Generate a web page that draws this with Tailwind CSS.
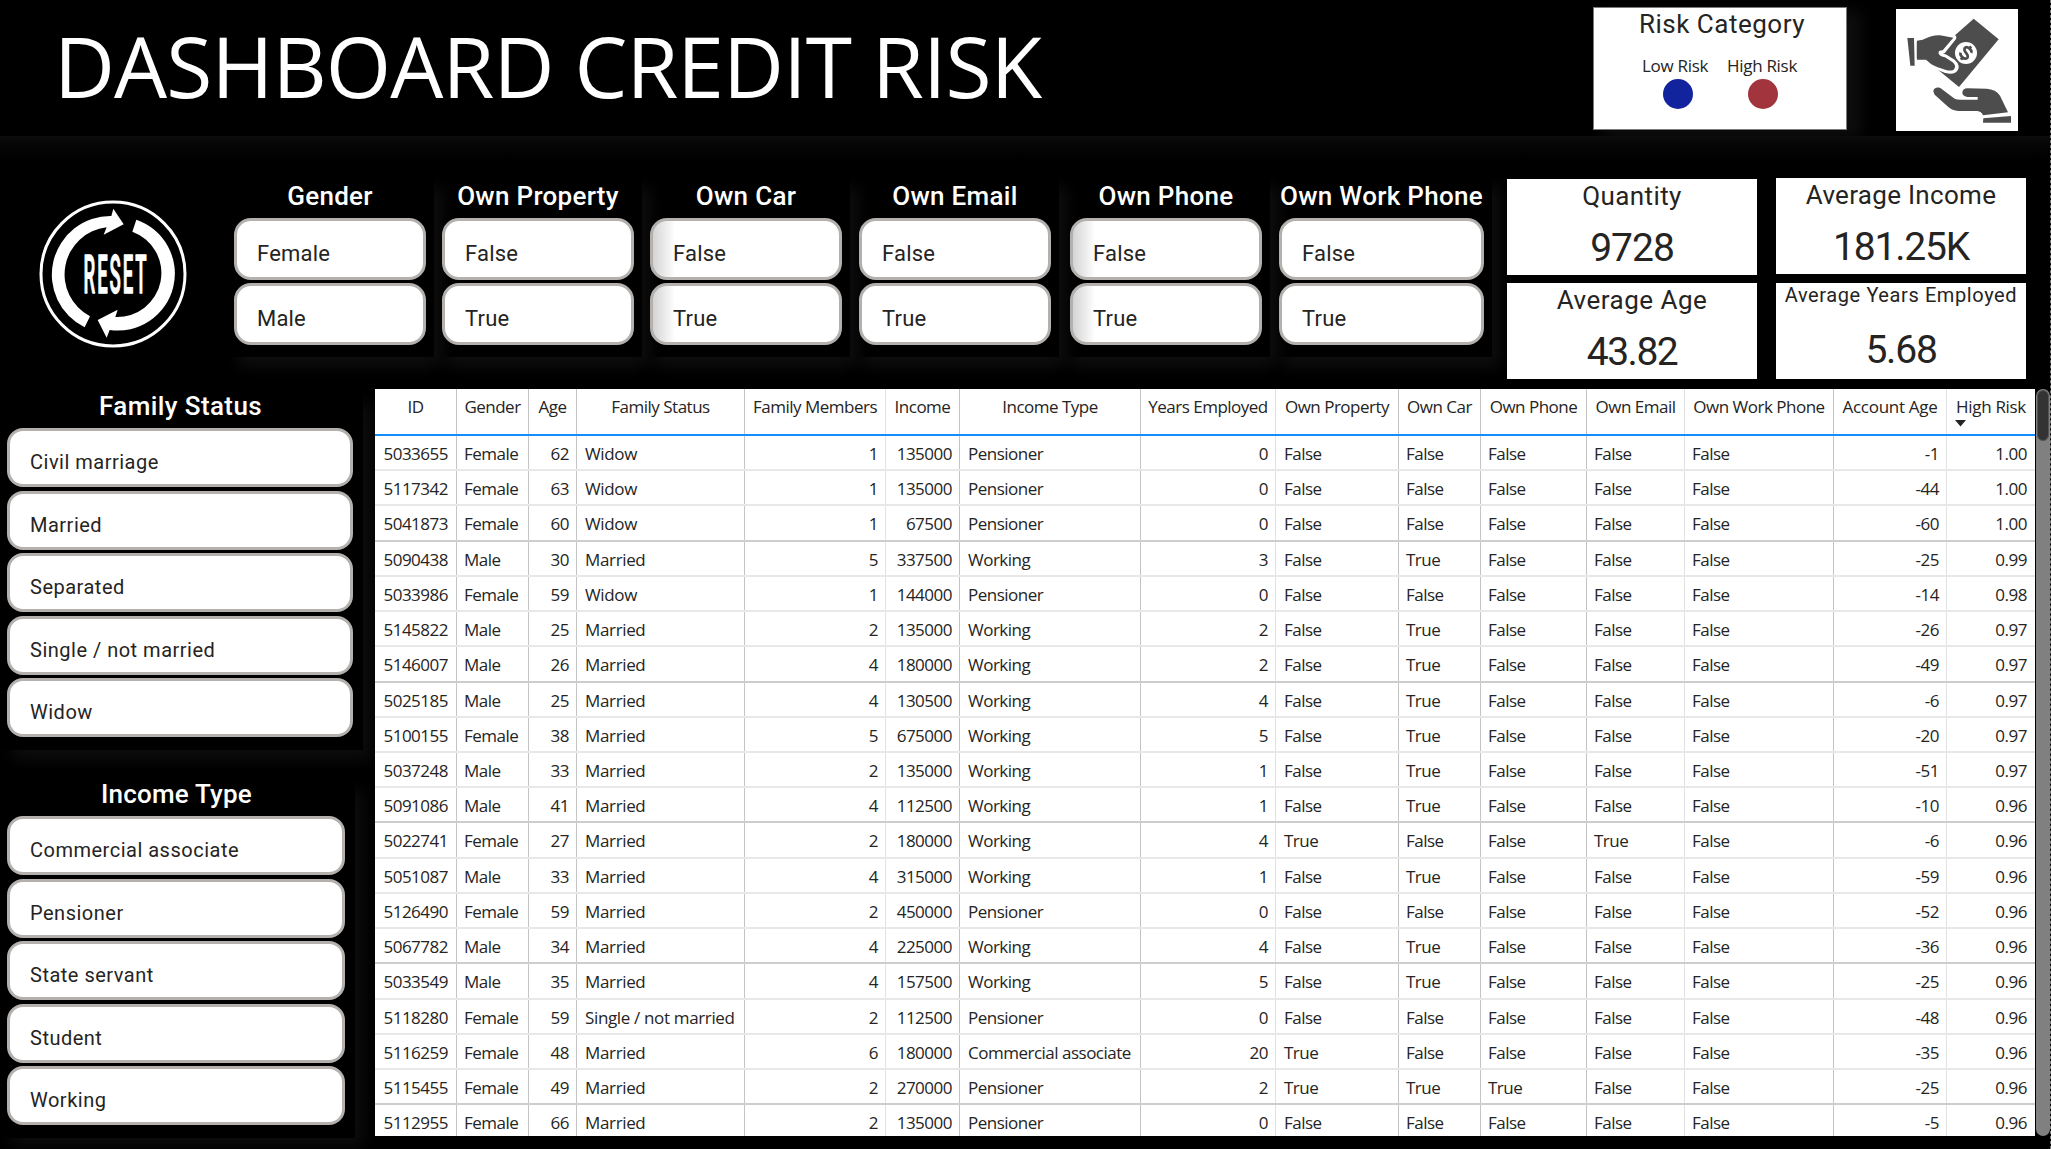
<!DOCTYPE html>
<html lang="en">
<head>
<meta charset="utf-8">
<title>Dashboard Credit Risk</title>
<script src="https://cdn.jsdelivr.net/npm/@tailwindcss/browser@4"></script>
</head>
<body class="w-[2051px] h-[1149px] overflow-hidden bg-black font-['Open_Sans',sans-serif] text-[#252423]">
<div class="relative flex h-full w-full flex-col">
  <header class="flex h-[136px] shrink-0 items-start">
    <h1 class="w-[1593px] pl-[54px] pt-[9px] text-[84px] leading-[114px] tracking-[-0.9px] whitespace-nowrap text-white">DASHBOARD CREDIT RISK</h1>
    <section class="mt-[7px] h-[123px] w-[254px] border border-[#7a7a7a] bg-white shadow-[12px_6px_14px_2px_#0e0e0e]">
      <h2 class="pt-px text-center font-[Roboto] text-[26px] leading-[30px] tracking-[0.5px] pl-[4px]">Risk Category</h2>
      <div class="flex gap-[19px] pl-[48px] pt-[15px] text-[17px] leading-[24px] tracking-[-0.3px]">
        <div class="flex w-[66px] flex-col items-center whitespace-nowrap"><span>Low Risk</span><i class="mt-px ml-[5px] size-[30px] rounded-full bg-[#12239e]"></i></div>
        <div class="flex w-[70px] flex-col items-center whitespace-nowrap"><span>High Risk</span><i class="mt-px ml-px size-[30px] rounded-full bg-[#a1343c]"></i></div>
      </div>
    </section>
    <svg class="ml-[49px] mt-[9px] size-[122px] shrink-0 bg-white" viewBox="18 15 366 366" fill="#4d4d4d">
      <path d="M251 44 326 106 207 249 142 196 112 167Z" />
      <path d="M70 100 98 107Q130 92 150 94L190 101 158 141Q143 140 146 150 150 158 165 160L188 174Q204 188 192 198 183 203 168 198 140 190 112 172L70 172Z" stroke="#fff" stroke-width="18" stroke-linejoin="round"/>
      <path d="M18 60H170L215 55 188 100 130 80 80 95V180L105 178 141 196 141 240H18Z" fill="#fff"/>
      <path d="M81 110 98 107Q130 92 150 94L190 101 158 139Q143 139 146 149 150 157 165 160L188 175Q201 187 191 197 183 202 168 198 140 190 124 181L108 167H81Z" />
      <path d="M52 102H72L74 185H61ZM130 262C130 250 148 246 156 256L194 284Q200 287 212 287H263V279H232Q216 276 217 265 219 253 232 253L290 254Q318 256 330 275L354 325 279 334Q274 322 262 321H205Q186 320 175 309L134 272ZM280 343 363 336V356H279Z"/>
      <circle cx="228" cy="147" r="33" fill="#fff"/>
      <g transform="rotate(38 228 147)" fill="none" stroke="#4d4d4d" stroke-width="8"><path d="M240 137C238 128 216 127 216 138 217 150 240 143 240 156 239 167 217 166 215 156M228 122V131M228 163V172"/></g>
    </svg>
  </header>

  <section class="flex h-[253px] shrink-0 bg-linear-to-b from-[#0c0c0c] to-black to-[40px] pt-[37px]">
    <div class="w-[226px] shrink-0 pl-[39px] pt-[27px]">
      <svg class="size-[148px] overflow-visible" viewBox="26 28 444 444" fill="#fff">
        <circle cx="248" cy="250" r="216" fill="none" stroke="#fff" stroke-width="9"/>
        <path d="M163 410A176 176 0 0 1 243 76L249 54 280 101 220 132 229 110A142 142 0 0 0 179 377Z"/>
        <path d="M318 87A171 171 0 0 1 238 418L229 441 202 388 262 357 255 379A132 132 0 0 0 306 123Z"/>
        <g transform="translate(257 306) scale(.345 1)"><text text-anchor="middle" font-family="Roboto" font-weight="500" font-size="162" letter-spacing="16" stroke="#fff" stroke-width="4" stroke-linejoin="round">RESET</text></g>
      </svg>
    </div>
    <div id="slicers" class="flex w-[1266px] shrink-0"></div>
    <div class="ml-[15px] grid w-[519px] shrink-0 grid-cols-[250px_250px] content-start gap-x-[19px] pt-[5px] text-center font-[Roboto]">
      <article class="mt-px h-[96px] bg-white"><h3 class="pt-[2px] text-[26px] leading-[30px] tracking-[0.4px]">Quantity</h3><p class="mt-[13px] text-[39px] leading-[48px] tracking-[-1px]">9728</p></article>
      <article class="h-[96px] bg-white"><h3 class="pt-[2px] text-[26px] leading-[30px] tracking-[0.3px]">Average Income</h3><p class="mt-[13px] text-[39px] leading-[48px] tracking-[-1.2px]">181.25K</p></article>
      <article class="mt-[8px] h-[96px] bg-white"><h3 class="pt-[2px] text-[26px] leading-[30px] tracking-[0.5px]">Average Age</h3><p class="mt-[13px] text-[39px] leading-[48px] tracking-[-1.5px]">43.82</p></article>
      <article class="mt-[8px] h-[96px] bg-white"><h3 class="text-[20px] leading-[24px] tracking-[0.6px]">Average Years Employed</h3><p class="mt-[19px] text-[39px] leading-[48px] tracking-[-1.2px]">5.68</p></article>
    </div>
  </section>

  <main class="flex min-h-0 flex-1">
    <aside class="w-[375px] shrink-0 font-[Roboto]">
      <section class="h-[361px] w-[363px] shadow-[10px_12px_14px_-2px_#0d0d0d]">
        <h2 class="pt-[2px] pr-[2px] text-center text-[26px] font-medium leading-[30px] tracking-[0.4px] text-white">Family Status</h2>
        <div id="family" class="mt-[7px] flex w-[353px] flex-col gap-[3.5px] pl-[7px]"></div>
      </section>
      <section class="mt-[28px] h-[360px] w-[355px] shadow-[10px_10px_14px_-2px_#0d0d0d]">
        <h2 class="pt-px pr-[2px] text-center text-[26px] font-medium leading-[30px] tracking-[0.2px] text-white">Income Type</h2>
        <div id="income" class="mt-[7px] flex w-[345px] flex-col gap-[3.5px] pl-[7px]"></div>
      </section>
    </aside>
    <section class="h-[747px] w-[1660px] shrink-0 overflow-hidden bg-white text-[17px] tracking-[-0.5px]">
      <div id="head" class="grid h-[47px] grid-cols-[82px_72px_48px_168px_141px_74px_181px_135px_123px_82px_106px_98px_149px_113px_88px] border-b-2 border-[#118dff] text-center"></div>
      <div id="rows"></div>
    </section>
    <div class="ml-px h-[747px] w-[14px] rounded-full bg-[#808080] p-px"><div class="h-[51px] rounded-full border border-[#555] bg-[#333]"></div></div>
  </main>
  <div class="absolute right-0 top-0 h-full border-r border-dashed border-[#777]"></div>
</div>

<script>
const slicers = [
  ['Gender', ['Female', 'Male'], 'w-[208px] pl-[8px]', ''],
  ['Own Property', ['False', 'True'], 'w-[208px] pl-[8px]', ''],
  ['Own Car', ['False', 'True'], 'w-[208px] pl-[8px]', 'shade'],
  ['Own Email', ['False', 'True'], 'w-[209px] pl-[9px]', ''],
  ['Own Phone', ['False', 'True'], 'w-[211px] pl-[11px]', 'shade'],
  ['Own Work Phone', ['False', 'True'], 'w-[222px] pl-[9px]', ''],
];
document.getElementById('slicers').innerHTML = slicers.map(([title, items, width, shade]) => `
  <section class="${width} pr-[8px] h-[184px] font-[Roboto] shadow-[10px_12px_14px_-2px_#0e0e0e]">
    <h2 class="-mx-[8px] pt-[8px] text-center text-[26px] font-medium leading-[30px] tracking-[0.3px] whitespace-nowrap text-white">${title}</h2>
    <div class="mt-[7px] flex flex-col gap-[3px]">${items.map(t => `
      <button class="block h-[62px] w-full rounded-[17px] border-[3px] border-[#b3b0ad] pl-[20px] pt-[9px] text-left text-[22px] leading-[47px] tracking-[0.2px] ${shade ? 'bg-linear-to-r from-[#d4d4d4] to-white to-[22px]' : 'bg-white'}">${t}</button>`).join('')}
    </div>
  </section>`).join('');

const list = (id, items) => document.getElementById(id).innerHTML = items.map(t =>
  `<button class="block h-[59px] rounded-[16px] border-[3px] border-[#b3b0ad] bg-white pl-[20px] pt-[9px] text-left text-[20px] leading-[44px] tracking-[0.5px]">${t}</button>`).join('');
list('family', ['Civil marriage', 'Married', 'Separated', 'Single / not married', 'Widow']);
list('income', ['Commercial associate', 'Pensioner', 'State servant', 'Student', 'Working']);

const columns = ['ID', 'Gender', 'Age', 'Family Status', 'Family Members', 'Income', 'Income Type', 'Years Employed', 'Own Property', 'Own Car', 'Own Phone', 'Own Email', 'Own Work Phone', 'Account Age', 'High Risk'];
const numeric = [0, 2, 4, 5, 7, 13, 14];
const wide = [0, 3, 6, 8, 14];
const border = i => i === 14 ? '' : [4, 7, 11, 13].includes(i) ? 'border-r border-[#e2e2e2]' : 'border-r border-[#c4c4c4]';
const padding = i => numeric.includes(i) ? (wide.includes(i) ? 'pr-[8px] text-right' : 'pr-[7px] text-right') : (wide.includes(i) ? 'pl-[8px]' : 'pl-[7px]');
document.getElementById('head').innerHTML = columns.map((c, i) =>
  `<div class="relative pt-[6px] leading-[24px] whitespace-nowrap ${i > 12 ? 'tracking-[-0.3px]' : ''} ${border(i)}">${c}${i === 14 ? '<svg class="absolute left-[8px] top-[31px] h-[7px] w-[11px]" viewBox="0 0 11 7"><path d="M0 0H11L5.5 6.5Z" fill="#252423"/></svg>' : ''}</div>`).join('');

const data = `5033655|Female|62|Widow|1|135000|Pensioner|0|False|False|False|False|False|-1|1.00
5117342|Female|63|Widow|1|135000|Pensioner|0|False|False|False|False|False|-44|1.00
5041873|Female|60|Widow|1|67500|Pensioner|0|False|False|False|False|False|-60|1.00
5090438|Male|30|Married|5|337500|Working|3|False|True|False|False|False|-25|0.99
5033986|Female|59|Widow|1|144000|Pensioner|0|False|False|False|False|False|-14|0.98
5145822|Male|25|Married|2|135000|Working|2|False|True|False|False|False|-26|0.97
5146007|Male|26|Married|4|180000|Working|2|False|True|False|False|False|-49|0.97
5025185|Male|25|Married|4|130500|Working|4|False|True|False|False|False|-6|0.97
5100155|Female|38|Married|5|675000|Working|5|False|True|False|False|False|-20|0.97
5037248|Male|33|Married|2|135000|Working|1|False|True|False|False|False|-51|0.97
5091086|Male|41|Married|4|112500|Working|1|False|True|False|False|False|-10|0.96
5022741|Female|27|Married|2|180000|Working|4|True|False|False|True|False|-6|0.96
5051087|Male|33|Married|4|315000|Working|1|False|True|False|False|False|-59|0.96
5126490|Female|59|Married|2|450000|Pensioner|0|False|False|False|False|False|-52|0.96
5067782|Male|34|Married|4|225000|Working|4|False|True|False|False|False|-36|0.96
5033549|Male|35|Married|4|157500|Working|5|False|True|False|False|False|-25|0.96
5118280|Female|59|Single / not married|2|112500|Pensioner|0|False|False|False|False|False|-48|0.96
5116259|Female|48|Married|6|180000|Commercial associate|20|True|False|False|False|False|-35|0.96
5115455|Female|49|Married|2|270000|Pensioner|2|True|True|True|False|False|-25|0.96
5112955|Female|66|Married|2|135000|Pensioner|0|False|False|False|False|False|-5|0.96`;
document.getElementById('rows').innerHTML = data.split('\n').map((line, r) => `
  <div class="grid h-[35.22px] grid-cols-[82px_72px_48px_168px_141px_74px_181px_135px_123px_82px_106px_98px_149px_113px_88px] border-b-2 ${r % 4 === 2 ? 'border-[#cdcdcd]' : 'border-[#e8e8e8]'}">${line.split('|').map((v, i) =>
    `<div class="pt-[6px] leading-[24px] whitespace-nowrap ${i === 3 ? 'tracking-[-0.35px]' : ''} ${padding(i)} ${border(i)}">${v}</div>`).join('')}</div>`).join('');
</script>
</body>
</html>
